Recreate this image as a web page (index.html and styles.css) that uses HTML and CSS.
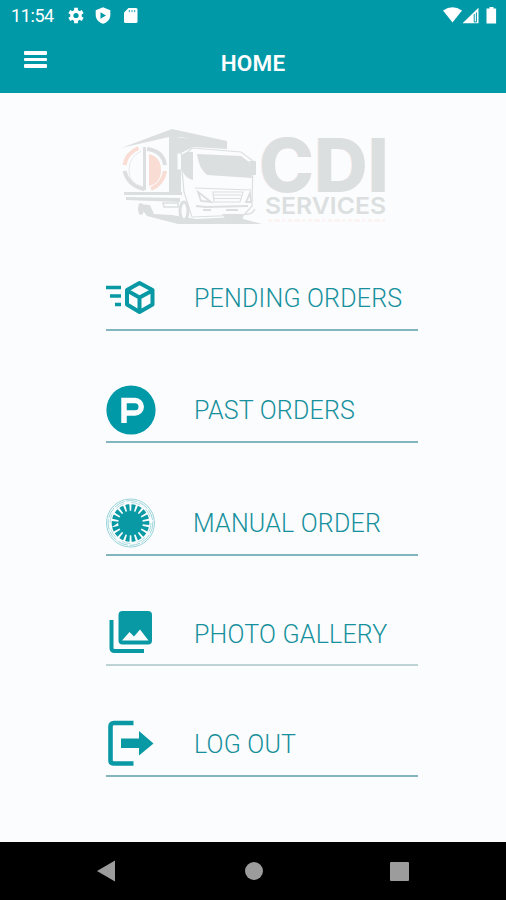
FILE: index.html
```html
<!DOCTYPE html>
<html lang="en">
<head>
    <meta charset="UTF-8">
    <meta name="viewport" content="width=device-width, initial-scale=1.0">
    <title>Home</title>
    <link rel="stylesheet" href="styles.css">
</head>
<body>

    <header class="header">
        <div class="status-bar">
            <span class="clock">11:54</span>
            <svg class="status-left" width="72" height="18" viewBox="0 0 72 18">
                <!-- settings -->
                <g fill="#fff" stroke="#fff">
                    <circle cx="9" cy="8.5" r="4.2" fill="none" stroke-width="3.2"/>
                    <path d="M9 .8v3M9 13.2v3M2.3 4.7l2.6 1.5M13.1 10.8l2.6 1.5M2.3 12.3l2.6-1.5M13.1 6.2l2.6-1.5" stroke-width="3.8"/>
                </g>
                <!-- play protect -->
                <path d="M36 .3l7.3 3v4.6c0 4.2-3 7.4-7.3 8.8-4.3-1.4-7.3-4.6-7.3-8.8V3.3z" fill="#fff"/>
                <path d="M33.5 5.2v6.6l5.5-3.3z" fill="#0099a8"/>
                <!-- sd card -->
                <path d="M61.5 1H69a1.5 1.5 0 0 1 1.5 1.5v12A1.5 1.5 0 0 1 69 16H58.5a1.5 1.5 0 0 1-1.5-1.5V5.5z" fill="#fff"/>
                <path d="M62.3 3v2.200M65 3v2.200M67.700 3v2.200" stroke="#0099a8" stroke-width=".9"/>
            </svg>
            <svg class="status-right" width="56" height="18" viewBox="0 0 56 18">
                <path d="M1 3.6Q10.5-3 20 3.6L10.5 15.500z" fill="#fff"/>
                <path d="M36.5 .8V16.3H20.5z" fill="#fff"/>
                <path d="M32.2 7v8h2.200V5.500" fill="none" stroke="#0099a8" stroke-width="1"/>
                <path d="M47.5 0h4v1.500h2.600v15H44.500v-15h3z" fill="#fff"/>
            </svg>
        </div>
        <div class="title-bar">
            <div class="menu-button"><span></span><span></span><span></span></div>
            <h1>HOME</h1>
        </div>
    </header>

    <main class="content">
        <svg class="logo" width="280" height="105" viewBox="120 125 280 105">
            <!-- cargo box -->
            <path d="M121 148l51-19 55 12v8l-46-12-12 0z" fill="#dcdfe0"/>
            <path d="M169 136l58 8v5l-34-2-12 6v41h-12z" fill="#dcdfe0"/>
            <path d="M124 192h58v3h-58zM126 197l54 1v4l-54-2z" fill="#dcdfe0"/>
            <!-- round emblem -->
            <g fill="none" stroke-width="4">
                <path d="M124.500 165q2-12 14-17" stroke="#f9ddd5"/>
                <path d="M124.500 171q4 15 20 18" stroke="#dcdfe0"/>
                <path d="M147 149q16 2 18 16" stroke="#dcdfe0"/>
                <path d="M165 171q-2 13-14 18" stroke="#f9ddd5"/>
                <path d="M144.500 147v43" stroke="#dcdfe0" stroke-width="3"/>
            </g>
            <path d="M149 154q12 3 12 16t-12 16z" fill="#f9ddd5"/>
            <path d="M141 151q-12 6-12 19t12 16" fill="none" stroke="#e8eaeb"/>
            <!-- road -->
            <path d="M138 204l9 12 31 8h84l-26-7-40 2-24-4-18-1-4-9z" fill="#dcdfe0"/>
            <!-- cab -->
            <path d="M181 158l11-10 49 4 12 9-1 45-8 9-52 2-8-25z" fill="#fbfcfd" stroke="#dcdfe0" stroke-width="1.200"/>
            <path d="M182 155q4-4 11-3v28q-8-2-11-10z" fill="#dcdfe0"/>
            <path d="M197 154l44 2 8 6 3 16-45-3q-8-6-10-21z" fill="#dcdfe0"/>
            <path d="M177 153h4.500v17H177z" fill="#fbfcfd" stroke="#dcdfe0"/>
            <path d="M249 161h7v14h-6z" fill="#dcdfe0"/>
            <path d="M195 188l56 2M213 192h30l-3 10h-26zM214 195h27M214 198.500h26" fill="none" stroke="#dcdfe0" stroke-width="1.200"/>
            <path d="M198 192l13 10-10-1zM250 193l-4 9h5zM196 206l10 1 42-1M203 210h8M226 210h12" fill="none" stroke="#dcdfe0" stroke-width="1.800"/>
            <path d="M222 214h22l-2 7h-15z" fill="#dcdfe0"/>
            <!-- wheels -->
            <ellipse cx="184" cy="211" rx="4" ry="9" fill="#fbfcfd" stroke="#dcdfe0" stroke-width="3"/>
            <ellipse cx="141" cy="209" rx="3" ry="6" fill="#dcdfe0"/>
            <path d="M163 203h15v4h-14zM245 214q7 1 10-5" fill="none" stroke="#dcdfe0" stroke-width="1.500"/>
            <!-- company name -->
            <text class="logo-name" x="259" y="191.500" textLength="130" lengthAdjust="spacingAndGlyphs">CDI</text>
            <text class="logo-services" x="265" y="213.500" textLength="121" lengthAdjust="spacingAndGlyphs">SERVICES</text>
            <path d="M268 220.500h117" stroke="#fbf4f2" stroke-width="3" stroke-dasharray="4 2 6 2 3 3"/>
        </svg>

        <nav class="menu">
            <a class="menu-item pending">
                <svg width="50" height="50" viewBox="0 0 50 50" fill="none" stroke="#0899a5">
                    <path d="M0 14.500h15M4 23h11M9 31.500h6" stroke-width="3.400"/>
                    <path d="M33.500 10l13 7v14.500l-13 7.500-12.500-7.500V17zM21 17.500l12.500 7 13-7M33.500 24.500v14" stroke-width="4" stroke-linejoin="round"/>
                </svg>
                <span>PENDING ORDERS</span>
            </a>
            <a class="menu-item past">
                <svg width="50" height="50" viewBox="0 0 50 50">
                    <circle cx="25" cy="25" r="24.600" fill="#0099a8"/>
                    <path d="M18 38V15.500h11a5.700 5.700 0 0 1 0 12.500H18" fill="none" stroke="#fbfcfd" stroke-width="5.500"/>
                </svg>
                <span>PAST ORDERS</span>
            </a>
            <a class="menu-item manual">
                <svg width="50" height="50" viewBox="0 0 50 50" fill="none" stroke="#0899a5">
                    <circle cx="24.500" cy="25" r="24" stroke-width=".8" opacity=".5"/>
                    <circle cx="24.500" cy="25" r="22.300" stroke-width=".7" stroke-dasharray="11 1.500" opacity=".55"/>
                    <circle cx="24.500" cy="25" r="20.500" stroke-width=".6" stroke-dasharray="9 7.100" opacity=".5"/>
                    <circle cx="24.500" cy="25" r="12.300" fill="#0899a5" stroke="none"/>
                    <circle cx="24.500" cy="25" r="15.300" stroke-width="7" pathLength="180" stroke-dasharray="6.600 3.400" transform="rotate(-6.600 24.500 25)"/>
                </svg>
                <span>MANUAL ORDER</span>
            </a>
            <a class="menu-item gallery">
                <svg width="50" height="50" viewBox="0 0 50 50">
                    <path d="M5.500 12v28q0 3 3 3H38" fill="none" stroke="#0899a5" stroke-width="4"/>
                    <rect x="12.500" y="3" width="33.500" height="33.500" rx="4" fill="#0899a5"/>
                    <path d="M16 32.500l7.500-8.500 4.500 4.500 6-7L42.500 32.500z" fill="#fbfcfd"/>
                </svg>
                <span>PHOTO GALLERY</span>
            </a>
            <a class="menu-item logout">
                <svg width="50" height="50" viewBox="0 0 50 50">
                    <path d="M27.500 4H8Q4.500 4 4.500 7.500v34q0 3 3.500 3h19.500" fill="none" stroke="#0899a5" stroke-width="4.600"/>
                    <path d="M15 19.500h18V12L47.500 24.500 33 36.500V29H15z" fill="#0899a5"/>
                </svg>
                <span>LOG OUT</span>
            </a>
        </nav>
    </main>

    <footer class="nav-bar">
        <svg width="18" height="22" viewBox="0 0 18 22"><path d="M0 11L18 .5v21z" fill="#9c9c9c"/></svg>
        <div class="nav-home"></div>
        <div class="nav-recent"></div>
    </footer>

</body>
</html>
```

FILE: styles.css
```css
* {
    box-sizing: border-box;
}

body {
    display: flex;
    flex-direction: column;
    height: 900px;
    margin: 0;
    font-family: Roboto, "Liberation Sans", sans-serif;
    background-color: #fbfcfd;
    overflow: hidden;
}

.header {
    height: 93px;
    background-color: #0099a8;
    color: white;
}

.status-bar {
    display: flex;
    height: 32px;
    padding: 7px 8px 0 11px;
}

.clock {
    width: 56px;
    font-size: 18px;
    line-height: 18px;
    letter-spacing: -0.4px;
}

.status-right {
    margin-left: auto;
}

.title-bar {
    display: grid;
    grid-template-columns: 1fr auto 1fr;
    padding: 18px 24px 0;
}

.menu-button {
    display: flex;
    flex-direction: column;
    gap: 3px;
    width: 23px;
    padding-top: 1px;
}

.menu-button span {
    height: 3.5px;
    background-color: white;
    border-radius: 1px;
}

.title-bar h1 {
    margin: 0;
    font-size: 22.5px;
    font-weight: 600;
    line-height: 26px;
    letter-spacing: 0.2px;
}

.content {
    flex: 1;
    padding: 32px 88px 0 106px;
}

.logo {
    display: block;
    margin-left: 14px;
}

.logo-name {
    font-family: Inter, sans-serif;
    font-size: 74px;
    font-weight: 800;
    fill: #dcdfe0;
    filter: drop-shadow(-1px 0 0 #faece8);
}

.logo-services {
    font-family: Inter, sans-serif;
    font-size: 22.5px;
    font-weight: 600;
    fill: #dcdfe0;
}

.menu {
    padding-top: 37px;
}

.menu-item {
    display: flex;
    align-items: center;
    gap: 38px;
    height: 64px;
    margin-bottom: 48px;
    border-bottom: 2px solid #83b5be;
    color: #16909c;
    font-size: 25px;
    font-weight: 300;
    letter-spacing: 0.2px;
}

.menu-item svg {
    flex: none;
}

.past {
    margin-bottom: 49px;
}

.manual {
    margin-bottom: 46px;
}

.manual span {
    margin-left: -1px;
}

.gallery {
    margin-bottom: 47px;
    border-bottom-color: #bed3d5;
}

.gallery span {
    padding-top: 2px;
}

.nav-bar {
    display: flex;
    align-items: center;
    height: 58px;
    padding-left: 97px;
    background-color: black;
}

.nav-home {
    width: 18px;
    height: 18px;
    margin-left: 130px;
    border-radius: 50%;
    background-color: #9c9c9c;
}

.nav-recent {
    width: 19px;
    height: 19px;
    margin-left: 127px;
    border-radius: 1px;
    background-color: #9c9c9c;
}
```
